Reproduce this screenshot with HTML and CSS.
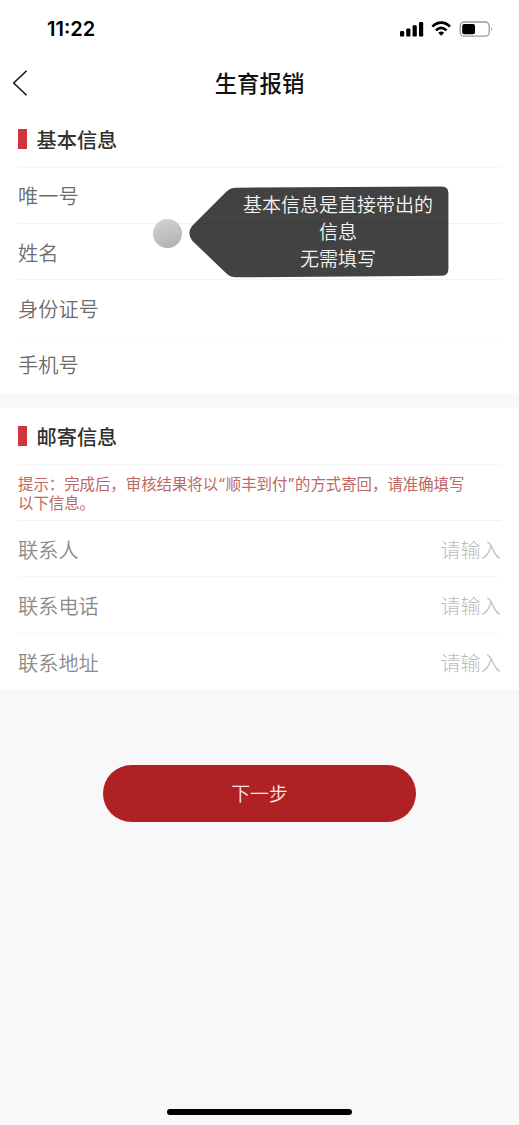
FILE: index.html
```html
<!DOCTYPE html>
<html lang="zh-CN">
<head>
<meta charset="utf-8">
<title>生育报销</title>
<link rel="stylesheet" href="styles.css">
</head>
<body>
<div class="screen">
  <header class="top">
    <div class="status">
      <span class="time">11:22</span>
      <svg class="status-icons" width="94" height="18" viewBox="0 0 94 18">
        <rect x="0" y="11" width="4.2" height="5.6" rx="1.2"/>
        <rect x="6.2" y="8.6" width="4.2" height="8" rx="1.2"/>
        <rect x="12.6" y="5.2" width="4.2" height="11.4" rx="1.2"/>
        <rect x="19" y="2" width="4.2" height="14.6" rx="1.2"/>
        <g fill="none" stroke="#000" stroke-width="2.7">
          <path d="M32.4 6.6C37.6 1.3 44.8 1.3 50 6.6"/>
          <path d="M35.9 10.4C39.2 7.2 43.2 7.2 46.5 10.4"/>
        </g>
        <path d="M38.2 12.7Q41.2 10.5 44.2 12.7L41.2 15.8Z"/>
        <rect x="60.2" y="2" width="29" height="14.2" rx="4" fill="none" stroke="#999" stroke-width="1.3"/>
        <rect x="62.2" y="4" width="12.8" height="10.2" rx="2"/>
        <path d="M91 6.8Q93 9.1 91 11.4Z" fill="#999"/>
      </svg>
    </div>
    <div class="nav">
      <svg class="back" width="16" height="28" viewBox="0 0 16 28"><path d="M14.6 1.8L1.7 14L14.6 26.2"/></svg>
      <h1 class="title">生育报销</h1>
    </div>
  </header>

  <section class="card">
    <h2 class="heading">基本信息</h2>
    <div class="row">唯一号</div>
    <div class="row">姓名</div>
    <div class="row row-faint">身份证号</div>
    <div class="row">手机号</div>
    <div class="guide">
      <span class="dot"></span>
      <svg class="bubble" width="260" height="92" viewBox="0 0 260 92">
        <path d="M47 1.700L253 .5Q259.400 .5 259.400 7V83Q259.400 89.500 253 89.700L47 91.300Q42 91.500 38 88L3.500 55Q-2.500 47.500 3 40L37 6Q41 1.700 47 1.700Z"/>
        <path class="bubble-line" d="M12 37.500H259"/>
      </svg>
      <p class="guide-text">基本信息是直接带出的<br>信息<br>无需填写</p>
    </div>
  </section>

  <section class="card card-mail">
    <h2 class="heading">邮寄信息</h2>
    <div class="hint">提示：完成后，审核结果将以<span class="quote">“</span>顺丰到付<span class="quote">”</span>的方式寄回，请准确填写<br>以下信息。</div>
    <div class="row row-input"><span>联系人</span><span class="placeholder">请输入</span></div>
    <div class="row row-input"><span>联系电话</span><span class="placeholder">请输入</span></div>
    <div class="row row-input"><span>联系地址</span><span class="placeholder">请输入</span></div>
  </section>

  <button class="next">下一步</button>
  <div class="home-bar"></div>
</div>
</body>
</html>
```
FILE: styles.css
```css
* { box-sizing: border-box; }
body {
  margin: 0;
  background: #f8f8f8;
  font-family: "Noto Sans CJK SC", sans-serif;
}
.screen {
  width: 519px;
  height: 1125px;
  display: flex;
  flex-direction: column;
  overflow: hidden;
}
.top { background: #fff; height: 111px; }
.status {
  height: 57px;
  padding: 0 25px 0 47px;
  display: flex;
  align-items: center;
  justify-content: space-between;
}
.time { font: 600 20px/24px Inter, sans-serif; color: #000; }
.nav {
  height: 52px;
  padding: 0 12px;
  display: grid;
  grid-template-columns: 16px 1fr 16px;
  align-items: center;
}
.back { fill: none; stroke: #111; stroke-width: 1.5; }
.title {
  margin: 0;
  padding-bottom: 2px;
  text-align: center;
  font-size: 22.400px;
  line-height: 30px;
  font-weight: 500;
  color: #111;
}
.card { position: relative; background: #fff; padding: 0 18px; }
.card-mail { margin-top: 15px; }
.heading {
  margin: 0;
  height: 56.500px;
  display: flex;
  align-items: center;
  gap: 10px;
  padding-top: 1px;
  font-size: 20.200px;
  font-weight: 500;
  color: #303030;
  border-bottom: 1px solid #f6f6f6;
}
.heading::before {
  content: "";
  width: 9px;
  height: 20px;
  margin-left: -.5px;
  background: #d0353b;
}
.row {
  height: 56.400px;
  padding-top: 1px;
  display: flex;
  align-items: center;
  justify-content: space-between;
  font-size: 20.200px;
  font-weight: 350;
  color: #6c6c6c;
  border-bottom: 1px solid #f4f4f4;
}
.row-faint { border-color: #fafafa; }
.row:last-child, .row:nth-child(5) { border-color: transparent; }
.row-input { color: #8a8a8a; }
.card-mail .row:nth-child(3) { border-color: #f7f7f7; }
.card-mail .row:nth-child(4) { border-color: #f7f7f7; }
.placeholder { color: #bcbcbc; font-weight: 300; }
.hint {
  height: 56.500px;
  padding-top: 9px;
  font-size: 15.400px;
  line-height: 18px;
  white-space: nowrap;
  color: #bd6864;
  border-bottom: 1px solid #f3f3f3;
}
.quote {
  display: inline-block;
  width: 7.700px;
  text-align: center;
  font-family: "Noto Sans", sans-serif;
  line-height: 16px;
}
.guide {
  position: absolute;
  left: 153px;
  top: 75px;
  width: 296px;
  height: 92px;
}
.dot {
  position: absolute;
  left: 0;
  top: 33px;
  width: 29px;
  height: 29px;
  border-radius: 50%;
  background: linear-gradient(160deg, #d6d5d6, #afaeaf);
}
.bubble { position: absolute; left: 36px; top: 0; fill: #424242; }
.bubble-line { stroke: #3c3c3c; stroke-width: 1; }
.guide-text {
  position: absolute;
  left: 85px;
  top: 4px;
  width: 200px;
  margin: 0;
  text-align: center;
  font-size: 19px;
  line-height: 27px;
  font-weight: 350;
  color: #f4f4f4;
}
.next {
  align-self: center;
  width: 313px;
  height: 57px;
  margin-top: 74.500px;
  padding: 0 0 1px;
  border: 0;
  border-radius: 29px;
  background: #b02124;
  color: #fbe9e9;
  font: 350 18.800px/28px "Noto Sans CJK SC", sans-serif;
}
.home-bar {
  align-self: center;
  width: 185px;
  height: 6px;
  margin-top: auto;
  margin-bottom: 10px;
  border-radius: 3px;
  background: #000;
}
```
